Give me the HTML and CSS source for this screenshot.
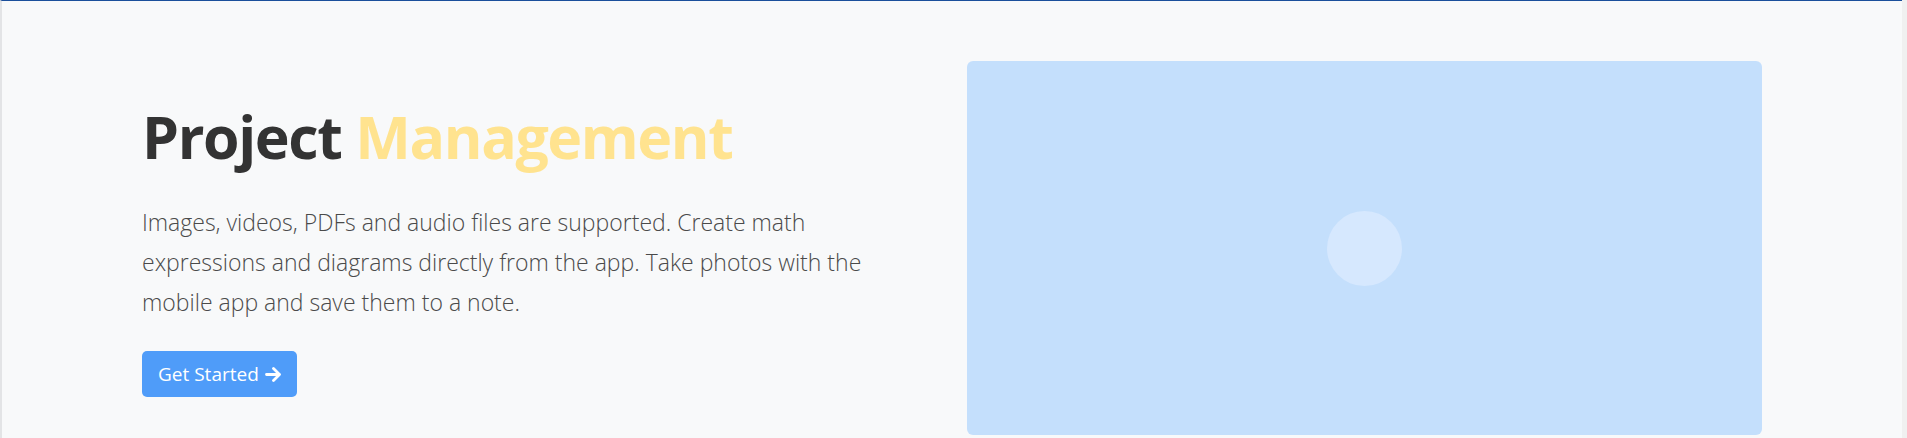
FILE: index.html
```html
<!DOCTYPE html>
<html lang="en">
<head>
<meta charset="utf-8">
<title>Project Management</title>
<link rel="stylesheet" href="styles.css">
</head>
<body>
<div class="page">
  <section class="hero">
    <div class="hero-text">
      <h1 class="title">Project <span class="accent">Management</span></h1>
      <p class="lead">Images, videos, PDFs and audio files are supported. Create math expressions and diagrams directly from the app. Take photos with the mobile app and save them to a note.</p>
      <a class="btn" href="#">Get Started
        <svg class="btn-icon" width="17" height="15" viewBox="0 0 17 15" aria-hidden="true">
          <path d="M1.5 7.5H14.5M8.5 1.5L14.5 7.5L8.5 13.5" fill="none" stroke="#fff" stroke-width="2.8" stroke-linecap="round" stroke-linejoin="round"/>
        </svg>
      </a>
    </div>
    <div class="media">
      <div class="media-dot"></div>
    </div>
  </section>
</div>
</body>
</html>
```
FILE: styles.css
```css
html, body {
  margin: 0;
  padding: 0;
  height: 100%;
}
body {
  background: #f0f0f0;
  font-family: "Open Sans", "Liberation Sans", sans-serif;
  overflow: hidden;
}
.page {
  box-sizing: border-box;
  margin-right: 5px;
  height: 100%;
  background: #f8f9fa;
  border-top: 1px solid #1b4f9b;
  border-left: 2px solid #e3e4e6;
}
.hero {
  display: grid;
  grid-template-columns: 1fr 1fr;
  column-gap: 30px;
  align-items: center;
  padding: 60px 140px 0 140px;
}
.hero-text {
  display: flex;
  flex-direction: column;
  align-items: flex-start;
  padding-top: 1px;
}
.title {
  margin: 0 0 30px 0;
  font-size: 59px;
  line-height: 72px;
  font-weight: 700;
  color: #333333;
  letter-spacing: -1.4px;
}
.accent {
  color: #ffe38f;
}
.lead {
  margin: 0 0 29px 0;
  max-width: 760px;
  font-size: 23px;
  line-height: 40px;
  font-weight: 300;
  color: #4a4a4a;
}
.btn {
  display: inline-flex;
  align-items: center;
  gap: 6px;
  box-sizing: border-box;
  height: 46px;
  padding: 0 15px 0 16px;
  background: #4f9cf9;
  color: #ffffff;
  border-radius: 5px;
  font-size: 19px;
  text-decoration: none;
}
.btn-icon {
  display: block;
}
.media {
  height: 374px;
  background: #c4dffc;
  border-radius: 6px;
  display: flex;
  align-items: center;
  justify-content: center;
}
.media-dot {
  width: 75px;
  height: 75px;
  border-radius: 50%;
  background: #d6e8fe;
}
```
